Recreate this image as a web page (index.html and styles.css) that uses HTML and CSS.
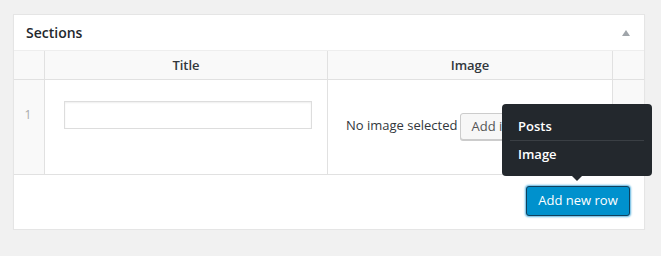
FILE: index.html
```html
<!DOCTYPE html>
<html lang="en">
<head>
<meta charset="utf-8">
<title>Sections</title>
<link rel="stylesheet" href="styles.css">
</head>
<body>
<div class="page">
  <div class="postbox">
    <div class="postbox-header">
      <h2 class="postbox-title">Sections</h2>
      <span class="toggle-indicator" aria-hidden="true"></span>
    </div>
    <table class="repeater">
      <thead>
        <tr>
          <th class="col-order"></th>
          <th class="col-title">Title</th>
          <th class="col-image">Image</th>
          <th class="col-remove"></th>
        </tr>
      </thead>
      <tbody>
        <tr>
          <td class="cell-order"><span class="row-number">1</span></td>
          <td class="cell-title"><input type="text" class="text-input"></td>
          <td class="cell-image"><span class="no-image">No image selected</span><button class="button" type="button">Add image</button></td>
          <td class="cell-remove"></td>
        </tr>
      </tbody>
    </table>
    <div class="actions">
      <button class="button-primary" type="button">Add new row</button>
    </div>
    <div class="popup">
      <ul class="popup-list">
        <li class="popup-item">Posts</li>
        <li class="popup-item">Image</li>
      </ul>
    </div>
  </div>
</div>
</body>
</html>
```

FILE: styles.css
```css
* {
  box-sizing: border-box;
}

html, body {
  margin: 0;
  padding: 0;
}

body {
  background: #f1f1f1;
  font-family: "Open Sans", "Liberation Sans", sans-serif;
  font-size: 13px;
  color: #444;
}

.page {
  padding: 14px 0 0 13px;
}

.postbox {
  position: relative;
  width: 632px;
  background: #fff;
  border: 1px solid #e5e5e5;
  box-shadow: 0 1px 1px rgba(0, 0, 0, 0.04);
}

.postbox-header {
  display: flex;
  align-items: center;
  justify-content: space-between;
  height: 36px;
  padding: 0 13px 0 12px;
  border-bottom: 1px solid #eee;
}

.postbox-title {
  margin: 0;
  font-size: 14px;
  font-weight: 600;
  line-height: 19px;
  color: #23282d;
}

.toggle-indicator {
  width: 0;
  height: 0;
  border-left: 4px solid transparent;
  border-right: 4px solid transparent;
  border-bottom: 6px solid #a0a5aa;
  margin-top: 1px;
  margin-right: 1px;
}

.repeater {
  width: 630px;
  table-layout: fixed;
  border-collapse: separate;
  border-spacing: 0;
}

.repeater th {
  background: #f9f9f9;
  padding: 0;
  line-height: 28px;
  font-size: 13px;
  font-weight: 600;
  color: #32373c;
  text-align: center;
  border-bottom: 1px solid #e1e1e1;
}

.repeater td {
  padding: 0;
  border-bottom: 1px solid #e1e1e1;
}

.col-order { width: 31px; border-right: 1px solid #e1e1e1; }
.col-title { width: 283px; border-right: 1px solid #e1e1e1; }
.col-image { width: 285px; border-right: 1px solid #e1e1e1; }
.col-remove { width: 31px; }

.cell-order {
  background: #f9f9f9;
  border-right: 1px solid #e1e1e1;
  vertical-align: top;
  text-align: center;
}

.repeater td.cell-order {
  padding-top: 21px;
}

.row-number {
  display: block;
  line-height: 28px;
  font-size: 12px;
  color: #aaa;
  padding-right: 2px;
}

.repeater td.cell-title {
  vertical-align: top;
  padding: 21px 15px 45px 19px;
  border-right: 1px solid #e1e1e1;
}

.text-input {
  display: block;
  width: 248px;
  height: 28px;
  margin: 0;
  padding: 3px 5px;
  border: 1px solid #ddd;
  border-radius: 0;
  background: #fff;
  box-shadow: inset 0 1px 2px rgba(0, 0, 0, 0.07);
  font-family: inherit;
  font-size: 14px;
}

.repeater td.cell-image {
  vertical-align: middle;
  padding: 0 0 1px 18px;
  white-space: nowrap;
  overflow: hidden;
  border-right: 1px solid #e1e1e1;
}

.no-image {
  color: #32373c;
  font-size: 13px;
}

.button {
  display: inline-block;
  vertical-align: middle;
  height: 27px;
  margin: 0 0 0 3px;
  padding: 0 10px 1px;
  font-family: inherit;
  font-size: 13px;
  line-height: 24px;
  color: #555;
  background: #f7f7f7;
  border: 1px solid #ccc;
  border-radius: 3px;
  box-shadow: 0 1px 0 #ccc;
}

.cell-remove {
  background: #f9f9f9;
}

.actions {
  display: flex;
  justify-content: flex-end;
  padding: 11px 14px 13px;
}

.button-primary {
  width: 104px;
  height: 30px;
  margin: 0;
  padding: 0 0 1px;
  text-align: center;
  font-family: inherit;
  font-size: 13px;
  font-weight: 400;
  line-height: 27px;
  color: #fff;
  background: #0091cd;
  border: 1px solid #10405c;
  border-radius: 3px;
  box-shadow: 0 0 2px 1px #5fb5e0;
}

.popup {
  position: absolute;
  left: 488px;
  top: 89px;
  width: 150px;
  padding: 9px 8px 8px;
  background: #23282d;
  border-radius: 4px;
}

.popup::after {
  content: "";
  position: absolute;
  left: 70px;
  top: 100%;
  border-left: 5px solid transparent;
  border-right: 5px solid transparent;
  border-top: 5px solid #23282d;
}

.popup-list {
  list-style: none;
  margin: 0;
  padding: 0;
}

.popup-item {
  padding: 0 8px;
  line-height: 27px;
  font-size: 13px;
  font-weight: 600;
  color: #fff;
}

.popup-item + .popup-item {
  border-top: 1px solid #3a3f44;
}
```
